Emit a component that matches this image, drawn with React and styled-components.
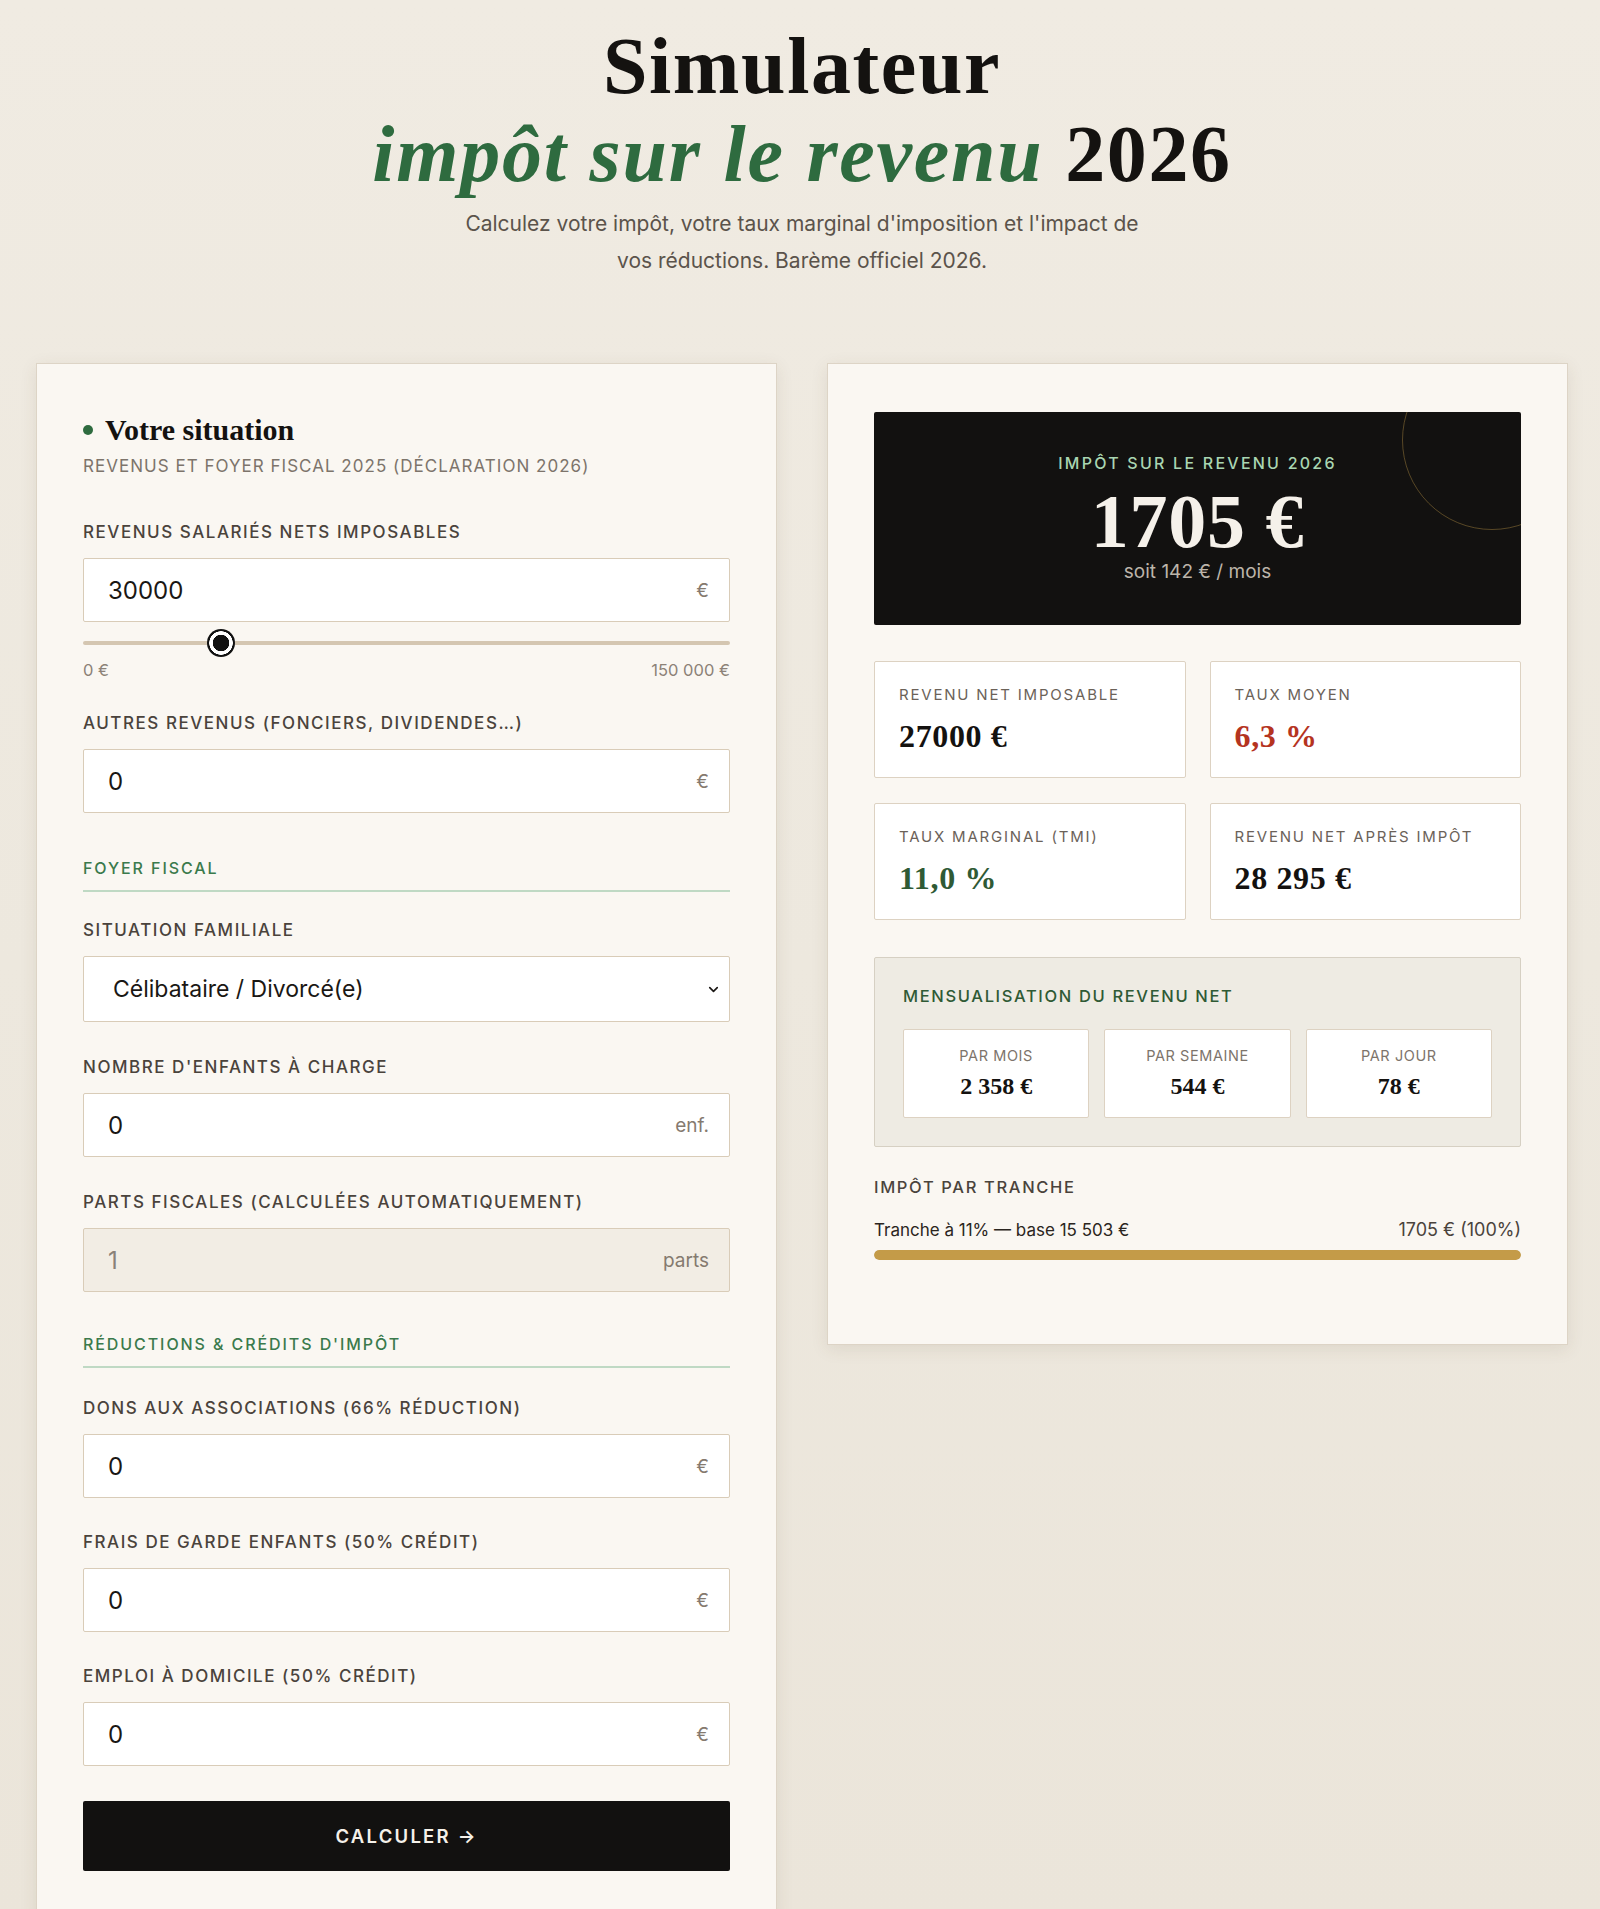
import React from "react";
import styled, { createGlobalStyle } from "styled-components";
import { ChevronDown } from "lucide-react";

const GlobalStyle = createGlobalStyle`
  * { box-sizing: border-box; }
  html, body { margin: 0; padding: 0; }
  body {
    background: linear-gradient(180deg, #f0ebe2 0%, #ede8de 50%, #ebe5da 100%);
    font-family: Inter, "Noto Sans", sans-serif;
    color: #1a1714;
    min-height: 1909px;
  }
`;

const SERIF = `"Liberation Serif", "DejaVu Serif", serif`;

const Page = styled.div`
  padding: 22px 32px 0 36px;
`;

const Header = styled.header`
  text-align: center;
`;

const Title = styled.h1`
  margin: 0;
  font-family: ${SERIF};
  font-weight: 700;
  font-size: 80px;
  line-height: 88px;
  letter-spacing: 0.02em;
  color: #141210;
`;

const TitleAccent = styled.em`
  font-style: italic;
  color: #2e6b3f;
  letter-spacing: 0.022em;
`;

const Lead = styled.p`
  margin: 8px auto 0;
  font-size: 21px;
  line-height: 36.5px;
  color: #5b534b;
`;

const Columns = styled.main`
  margin-top: 84px;
  display: grid;
  grid-template-columns: 1fr 1fr;
  gap: 50px;
  align-items: start;
`;

const Panel = styled.section`
  background: #faf7f2;
  border: 1px solid #ddd4c6;
  box-shadow: 0 4px 16px rgba(90, 70, 40, 0.1);
  padding: 48px 46px;
  display: flex;
  flex-direction: column;
`;

const PanelTitle = styled.div`
  display: flex;
  align-items: center;
  gap: 12px;
`;

const Dot = styled.span`
  width: 10px;
  height: 10px;
  border-radius: 50%;
  background: #2e6b3f;
  flex: none;
`;

const H2 = styled.h2`
  margin: 0;
  font-family: ${SERIF};
  font-weight: 700;
  font-size: 30px;
  line-height: 36px;
  color: #141210;
`;

const PanelSub = styled.div`
  margin-top: 8px;
  font-size: 17px;
  line-height: 20px;
  letter-spacing: 0.06em;
  color: #7d746b;
  text-transform: uppercase;
`;

const Field = styled.div`
  margin-top: ${(p) => p.$mt || "34px"};
  display: flex;
  flex-direction: column;
`;

const Label = styled.label`
  font-size: 17px;
  line-height: 20px;
  font-weight: 500;
  letter-spacing: 0.09em;
  text-transform: uppercase;
  color: #4a433c;
  margin-bottom: 16px;
`;

const InputBox = styled.div`
  height: ${(p) => p.$h || "64px"};
  display: flex;
  align-items: center;
  gap: 12px;
  padding: 0 ${(p) => p.$pr || "20px"} 0 ${(p) => p.$pl || "24px"};
  border: 1px solid #d9ccb8;
  border-radius: 2px;
  background: ${(p) => (p.$muted ? "#f2ede4" : "#ffffff")};
`;

const TextInput = styled.input`
  flex: 1;
  min-width: 0;
  border: none;
  outline: none;
  background: transparent;
  font-family: Inter, "Noto Sans", sans-serif;
  font-size: 24px;
  color: ${(p) => (p.readOnly ? "#8a8178" : "#1a1714")};
  padding: 0;
`;

const Select = styled.select`
  flex: 1;
  appearance: none;
  -webkit-appearance: none;
  border: none;
  outline: none;
  background: transparent;
  font-family: Inter, "Noto Sans", sans-serif;
  font-size: 23px;
  color: #1a1714;
  padding: 0;
`;

const Suffix = styled.span`
  font-size: 19px;
  color: #857a6f;
`;

const Range = styled.input`
  margin: 7px 0 0;
  width: 100%;
  height: 28px;
  appearance: none;
  -webkit-appearance: none;
  background: transparent;
  &::-webkit-slider-runnable-track {
    height: 4px;
    border-radius: 2px;
    background: #d4c6b1;
  }
  &::-webkit-slider-thumb {
    -webkit-appearance: none;
    width: 28px;
    height: 28px;
    margin-top: -12px;
    border-radius: 50%;
    background: radial-gradient(circle, #111 0 8px, #fff 8.5px 11.5px, #111 12px);
  }
`;

const RangeLabels = styled.div`
  margin-top: 5px;
  display: flex;
  justify-content: space-between;
  font-size: 16.5px;
  line-height: 17px;
  color: #8c8278;
`;

const SectionHead = styled.div`
  margin-top: ${(p) => p.$mt || "45px"};
  padding-bottom: 12px;
  border-bottom: 2px solid #bfd9c4;
  font-size: 16px;
  line-height: 20px;
  font-weight: 500;
  letter-spacing: 0.12em;
  text-transform: uppercase;
  color: #3a7a4c;
`;

const Button = styled.button`
  margin-top: 35px;
  height: 70px;
  border: none;
  border-radius: 2px;
  background: #121110;
  color: #f5f1ea;
  font-family: Inter, "Noto Sans", sans-serif;
  font-size: 18.5px;
  font-weight: 600;
  letter-spacing: 0.12em;
  cursor: pointer;
`;

/* Right panel */

const Hero = styled.div`
  position: relative;
  overflow: hidden;
  background: #121110;
  border-radius: 2px;
  padding: 42px 20px;
  display: flex;
  flex-direction: column;
  align-items: center;
  text-align: center;
`;

const HeroRing = styled.span`
  position: absolute;
  top: -62px;
  right: -61px;
  width: 180px;
  height: 180px;
  border-radius: 50%;
  border: 1.5px solid rgba(196, 155, 72, 0.4);
`;

const HeroLabel = styled.div`
  font-size: 16px;
  line-height: 18px;
  font-weight: 500;
  letter-spacing: 0.14em;
  color: #a9d6b2;
`;

const HeroValue = styled.div`
  margin-top: 9px;
  font-family: ${SERIF};
  font-weight: 700;
  font-size: 76px;
  line-height: 80px;
  letter-spacing: 0.01em;
  color: #f5f1ea;
`;

const HeroSub = styled.div`
  font-size: 19px;
  line-height: 22px;
  color: #bdb5aa;
`;

const StatGrid = styled.div`
  margin-top: 36px;
  display: grid;
  grid-template-columns: 1fr 1fr;
  column-gap: 24px;
  row-gap: 25px;
`;

const StatCard = styled.div`
  background: #ffffff;
  border: 1px solid #ddd2c2;
  border-radius: 2px;
  padding: 24px;
  display: flex;
  flex-direction: column;
  gap: 15px;
`;

const StatLabel = styled.div`
  font-size: 15px;
  line-height: 18px;
  letter-spacing: 0.12em;
  text-transform: uppercase;
  color: #6b6259;
`;

const StatValue = styled.div`
  font-family: ${SERIF};
  font-weight: 700;
  font-size: 32px;
  line-height: 34px;
  letter-spacing: 0.02em;
  color: ${(p) => p.$color || "#141210"};
`;

const MonthBox = styled.div`
  margin-top: 37px;
  background: #eeebe3;
  border: 1px solid #d6d0c3;
  border-radius: 2px;
  padding: 28px;
`;

const MonthTitle = styled.div`
  font-size: 16.5px;
  line-height: 20px;
  font-weight: 500;
  letter-spacing: 0.1em;
  text-transform: uppercase;
  color: #2f5a35;
`;

const MonthRow = styled.div`
  margin-top: 23px;
  display: grid;
  grid-template-columns: repeat(3, 1fr);
  gap: 15px;
`;

const MonthCard = styled.div`
  background: #ffffff;
  border: 1px solid #ddd2c2;
  border-radius: 2px;
  padding: 17px 10px 18px;
  display: flex;
  flex-direction: column;
  align-items: center;
  gap: 9px;
`;

const MonthLabel = styled.div`
  font-size: 14.5px;
  line-height: 17px;
  letter-spacing: 0.04em;
  text-transform: uppercase;
  color: #7d746b;
`;

const MonthValue = styled.div`
  font-family: ${SERIF};
  font-weight: 700;
  font-size: 24px;
  line-height: 26px;
  color: #141210;
`;

const TrancheHead = styled.div`
  margin-top: 30px;
  font-size: 16.5px;
  line-height: 20px;
  font-weight: 500;
  letter-spacing: 0.1em;
  text-transform: uppercase;
  color: #4a433c;
`;

const TrancheRow = styled.div`
  margin-top: 23px;
  display: flex;
  justify-content: space-between;
  font-size: 17px;
  line-height: 20px;
  color: #2a2520;
`;

const TrancheRight = styled.span`
  font-size: 18px;
  color: #4a433c;
`;

const Bar = styled.div`
  margin-top: 10px;
  margin-bottom: 36px;
  height: 10px;
  border-radius: 5px;
  background: #e6dccb;
  overflow: hidden;
`;

const BarFill = styled.div`
  height: 100%;
  border-radius: 5px;
  background: #c49b48;
`;

function NumberField({ label, value, suffix, mt, muted }) {
  return (
    <Field $mt={mt}>
      <Label>{label}</Label>
      <InputBox $muted={muted}>
        <TextInput defaultValue={value} readOnly={muted} />
        <Suffix>{suffix}</Suffix>
      </InputBox>
    </Field>
  );
}

export default function App() {
  return (
    <>
      <GlobalStyle />
      <Page>
        <Header>
          <Title>
            Simulateur
            <br />
            <TitleAccent>impôt sur le revenu</TitleAccent> 2026
          </Title>
          <Lead>
            Calculez votre impôt, votre taux marginal d'imposition et l'impact de
            <br />
            vos réductions. Barème officiel 2026.
          </Lead>
        </Header>

        <Columns>
          <Panel>
            <PanelTitle>
              <Dot />
              <H2>Votre situation</H2>
            </PanelTitle>
            <PanelSub>Revenus et foyer fiscal 2025 (déclaration 2026)</PanelSub>

            <Field $mt="46px">
              <Label>Revenus salariés nets imposables</Label>
              <InputBox>
                <TextInput defaultValue="30000" />
                <Suffix>€</Suffix>
              </InputBox>
              <Range type="range" min="0" max="150000" step="500" defaultValue="30000" />
              <RangeLabels>
                <span>0 €</span>
                <span>150 000 €</span>
              </RangeLabels>
            </Field>

            <NumberField label="Autres revenus (fonciers, dividendes…)" value="0" suffix="€" />

            <SectionHead>Foyer fiscal</SectionHead>

            <Field $mt="28px">
              <Label>Situation familiale</Label>
              <InputBox $h="66px" $pl="29px" $pr="8px">
                <Select defaultValue="celib">
                  <option value="celib">Célibataire / Divorcé(e)</option>
                  <option value="marie">Marié(e) / Pacsé(e)</option>
                  <option value="veuf">Veuf / Veuve</option>
                </Select>
                <ChevronDown size={15} strokeWidth={2.6} color="#1a1714" />
              </InputBox>
            </Field>

            <NumberField label="Nombre d'enfants à charge" value="0" suffix="enf." mt="35px" />
            <NumberField label="Parts fiscales (calculées automatiquement)" value="1" suffix="parts" mt="35px" muted />

            <SectionHead $mt="42px">Réductions &amp; crédits d'impôt</SectionHead>

            <NumberField label="Dons aux associations (66% réduction)" value="0" suffix="€" mt="30px" />
            <NumberField label="Frais de garde enfants (50% crédit)" value="0" suffix="€" />
            <NumberField label="Emploi à domicile (50% crédit)" value="0" suffix="€" />

            <Button type="button">CALCULER →</Button>
          </Panel>

          <Panel>
            <Hero>
              <HeroRing />
              <HeroLabel>IMPÔT SUR LE REVENU 2026</HeroLabel>
              <HeroValue>1705 €</HeroValue>
              <HeroSub>soit 142 € / mois</HeroSub>
            </Hero>

            <StatGrid>
              <StatCard>
                <StatLabel>Revenu net imposable</StatLabel>
                <StatValue>27000 €</StatValue>
              </StatCard>
              <StatCard>
                <StatLabel>Taux moyen</StatLabel>
                <StatValue $color="#b5341f">6,3 %</StatValue>
              </StatCard>
              <StatCard>
                <StatLabel>Taux marginal (TMI)</StatLabel>
                <StatValue $color="#2f5a35">11,0 %</StatValue>
              </StatCard>
              <StatCard>
                <StatLabel>Revenu net après impôt</StatLabel>
                <StatValue>28 295 €</StatValue>
              </StatCard>
            </StatGrid>

            <MonthBox>
              <MonthTitle>Mensualisation du revenu net</MonthTitle>
              <MonthRow>
                <MonthCard>
                  <MonthLabel>Par mois</MonthLabel>
                  <MonthValue>2 358 €</MonthValue>
                </MonthCard>
                <MonthCard>
                  <MonthLabel>Par semaine</MonthLabel>
                  <MonthValue>544 €</MonthValue>
                </MonthCard>
                <MonthCard>
                  <MonthLabel>Par jour</MonthLabel>
                  <MonthValue>78 €</MonthValue>
                </MonthCard>
              </MonthRow>
            </MonthBox>

            <TrancheHead>Impôt par tranche</TrancheHead>
            <TrancheRow>
              <span>Tranche à 11% — base 15 503 €</span>
              <TrancheRight>1705 € (100%)</TrancheRight>
            </TrancheRow>
            <Bar>
              <BarFill style={{ width: "100%" }} />
            </Bar>
          </Panel>
        </Columns>
      </Page>
    </>
  );
}
